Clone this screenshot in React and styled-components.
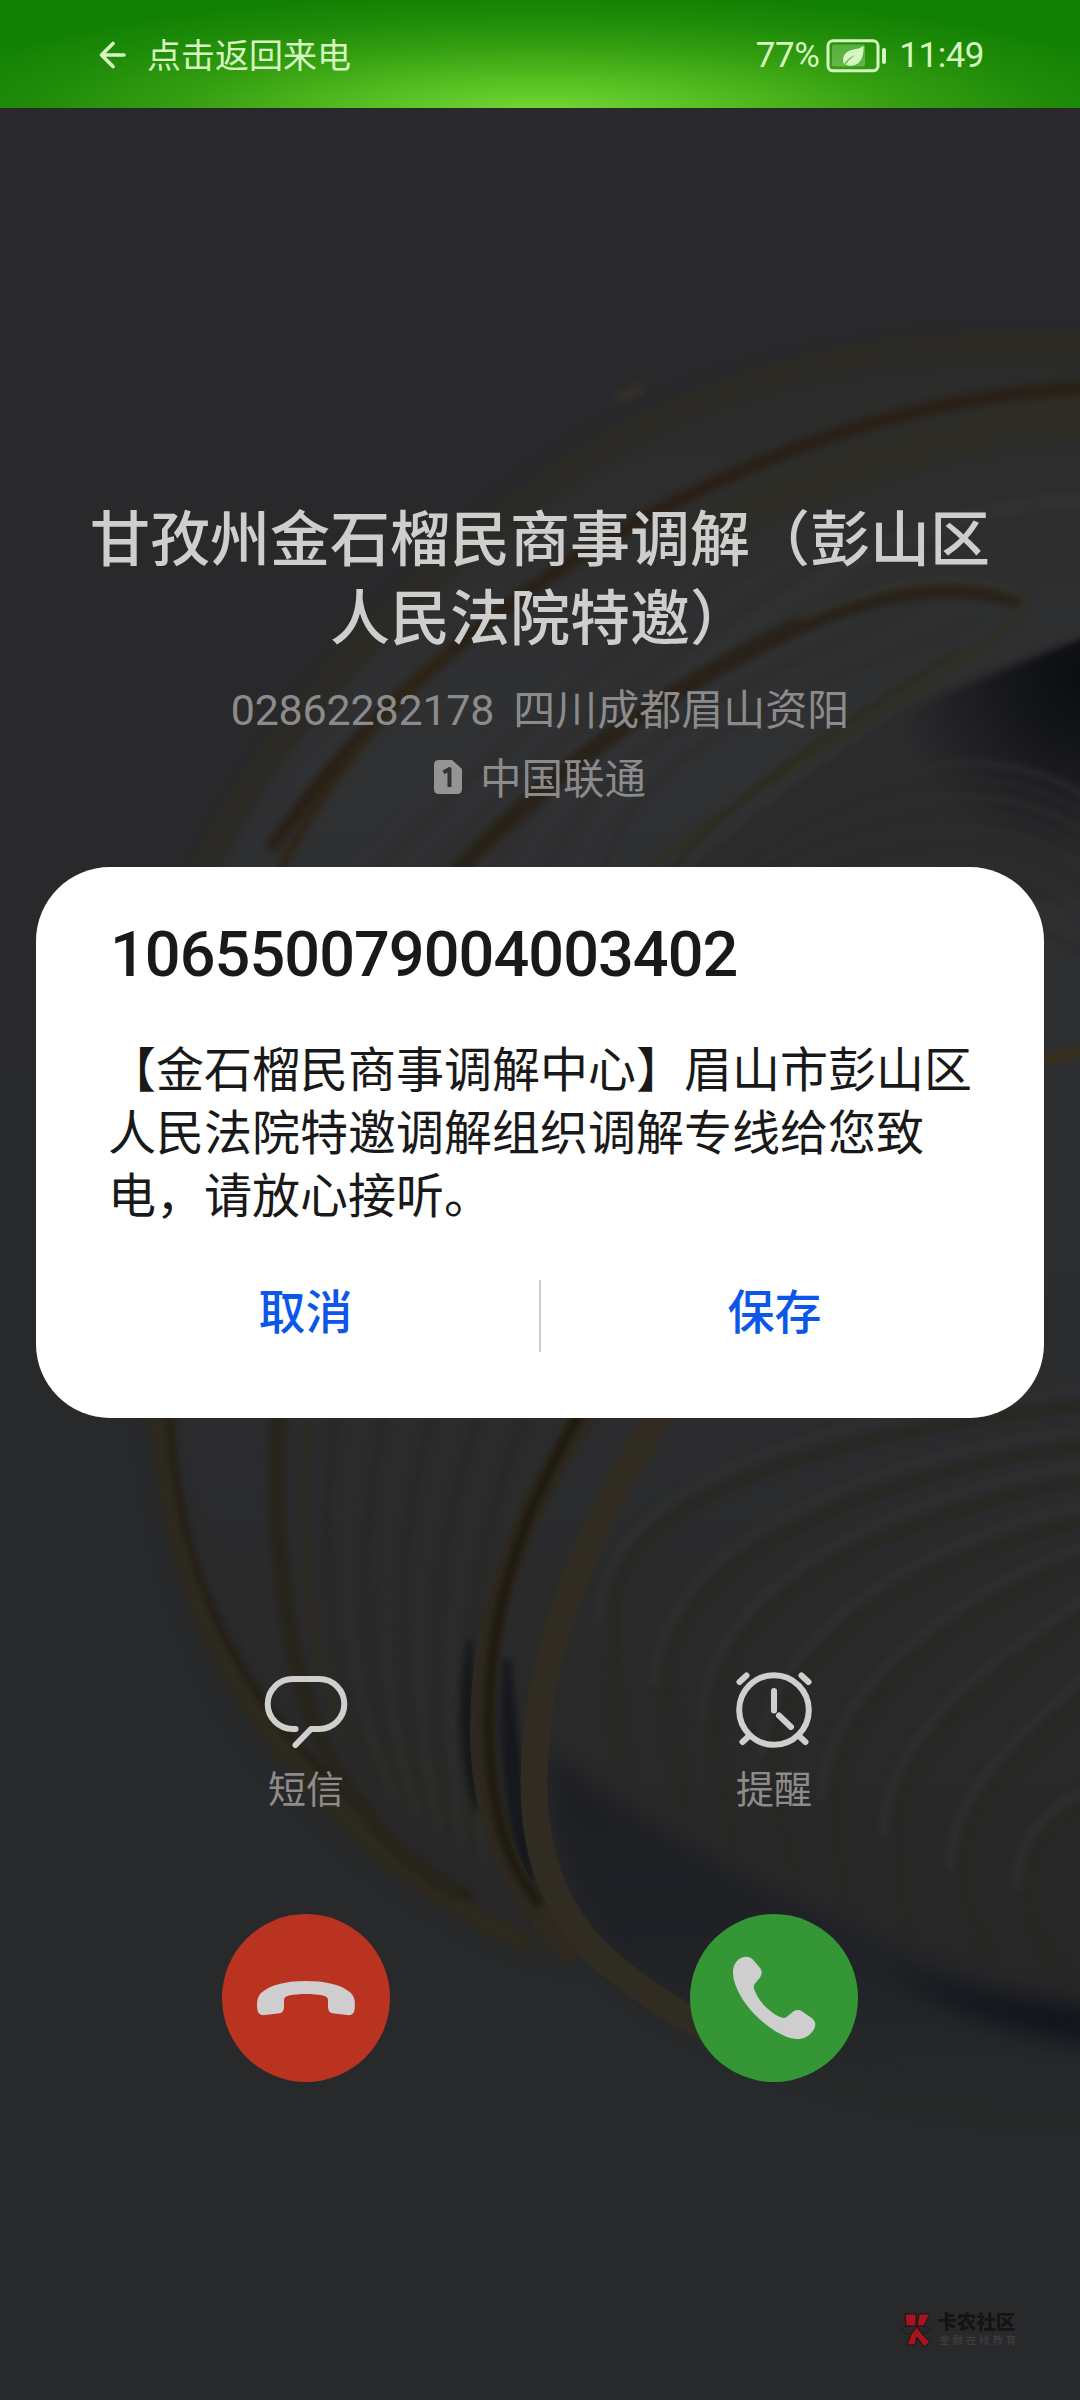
import React from 'react';
import styled, {createGlobalStyle} from 'styled-components';

const GlobalStyle = createGlobalStyle`
  body {
    background-color: #28292b;
    margin: 0;
  }

  button {
    background: none;
    border: 0;
    font-family: inherit;
    padding: 0;
  }
`;

const Screen = styled.div`
  background: linear-gradient(#29292b, #28292b 60%, #27292a 80%, #28292a);
  display: flex;
  flex-direction: column;
  font-family: Roboto, 'Noto Sans CJK SC', sans-serif;
  height: 2400px;
  isolation: isolate;
  overflow: hidden;
  position: relative;
  width: 1080px;
`;

const WallpaperArt = styled.svg`
  left: 0;
  position: absolute;
  top: 0;
  z-index: -1;
`;

const StatusBar = styled.header`
  align-items: center;
  background: radial-gradient(ellipse 640px 118px at 50% 104%, #74d936, #55be21 28%, #36a012 55%, #1f8b09 80%, #128103);
  box-sizing: border-box;
  color: #d6f8c0;
  display: flex;
  height: 108px;
  justify-content: space-between;
  padding: 3px 96px 0 99px;
`;

const ReturnLink = styled.div`
  align-items: center;
  display: flex;
  font-size: 34px;
  gap: 21px;
  line-height: 50px;

  svg {
    margin-bottom: 2px;
  }
`;

const StatusInfo = styled.div`
  align-items: center;
  display: flex;
  font-size: 35px;
  letter-spacing: -0.5px;
  line-height: 50px;

  svg {
    margin: 0 12px 0 7px;
  }
`;

const Caller = styled.section`
  align-items: center;
  box-sizing: border-box;
  display: flex;
  flex-direction: column;
  height: 759px;
  padding-top: 393px;
`;

const CallerName = styled.h1`
  color: #cecece;
  font-size: 60px;
  font-weight: 500;
  line-height: 79px;
  margin: 0 0 17px;
  text-align: center;
  width: 900px;
`;

const CallerLine = styled.div`
  align-items: center;
  color: #8b8b8b;
  display: flex;
  font-size: ${props => props.size || 42}px;
  gap: ${props => props.gap}px;
  line-height: 69px;

  svg {
    margin-bottom: 5px;
  }
`;

const Digits = styled.span`
  font-size: 43px;
  letter-spacing: -0.2px;
`;

const Dialog = styled.section`
  background-color: #fff;
  border-radius: 74px;
  box-sizing: border-box;
  color: #191919;
  display: flex;
  flex-direction: column;
  height: 551px;
  margin: 0 36px;
  padding: 51px 0 63px;
`;

const DialogTitle = styled.h2`
  font-size: 63px;
  font-weight: 500;
  letter-spacing: -0.95px;
  line-height: 74px;
  margin: 0 0 47px;
  padding: 0 74px;
`;

const DialogText = styled.p`
  font-size: 48px;
  line-height: 63px;
  margin: 0;
  padding: 0 72px;
  width: 864px;
`;

const DialogButtons = styled.div`
  align-items: center;
  display: grid;
  grid-template-columns: 1fr 2px 1fr;
  margin-top: auto;
`;

const DialogButton = styled.button`
  color: #0d57e8;
  font-size: 47px;
  font-weight: 500;
  line-height: 72px;
  padding: ${props => (props.end ? '0 36px 6px 0' : '0 0 6px 36px')};
`;

const Divider = styled.span`
  background-color: #cfcfcf;
  height: 72px;
`;

const CallControls = styled.section`
  display: grid;
  grid-template-columns: 468px 468px;
  justify-content: center;
  justify-items: center;
  padding-top: 252px;
`;

const QuickAction = styled.button`
  align-items: center;
  color: #8c8c8c;
  display: flex;
  flex-direction: column;
  font-size: 38px;
  height: 244px;
  line-height: 56px;

  svg {
    height: 84px;
    margin-bottom: 8px;
  }
`;

const RoundButton = styled.button`
  align-items: center;
  background-color: ${props => props.color};
  border-radius: 50%;
  display: flex;
  height: 168px;
  justify-content: center;
  width: 168px;
`;

const Brand = styled.footer`
  align-items: center;
  align-self: flex-end;
  display: flex;
  gap: 4px;
  margin: auto 61px 52px 0;
`;

const BrandText = styled.div`
  color: #141415;
  font-size: 19.5px;
  font-weight: 900;
  line-height: 20px;
`;

const BrandTagline = styled.div`
  color: #3d3e40;
  font-size: 10.5px;
  font-weight: 500;
  letter-spacing: 2.8px;
  line-height: 15px;
  padding-left: 2px;
`;

// Ridges fan in from the right edge and hook down on the left
const ridges = [
  [1405, 613, 1620, 625, 1770],
  [1445, 668, 1685, 690, 1820],
  [1480, 716, 1720, 735, 1850],
  [1520, 775, 1755, 795, 1880],
  [1560, 835, 1800, 850, 1910],
  [1610, 897, 1835, 910, 1930],
  [1665, 964, 1870, 985, 1950],
  [1770, 1030, 1890, 1055, 1970]
];

// Thin strands running alongside the outer ring
const strands = [0, 1, 2, 3, 4, 5, 6, 7, 8, 9];

const Wallpaper = () => (
  <WallpaperArt width="1080" height="2400" viewBox="0 0 1080 2400" fill="none" aria-hidden="true">
    <defs>
      <filter id="soft" x="0" y="0" width="1080" height="2400" filterUnits="userSpaceOnUse" colorInterpolationFilters="sRGB">
        <feGaussianBlur stdDeviation="3" />
      </filter>
      <filter id="softer" x="0" y="0" width="1080" height="2400" filterUnits="userSpaceOnUse" colorInterpolationFilters="sRGB">
        <feGaussianBlur stdDeviation="12" />
      </filter>
      <linearGradient id="shade" x1="0" y1="0" x2="0" y2="1">
        <stop offset="0" stopColor="#1d1e22" />
        <stop offset="0.5" stopColor="#1f2126" />
        <stop offset="1" stopColor="#27292b" />
      </linearGradient>
      <linearGradient id="body" x1="0" y1="350" x2="0" y2="2000" gradientUnits="userSpaceOnUse">
        <stop offset="0" stopColor="#2b2b2a" />
        <stop offset="0.25" stopColor="#303133" />
        <stop offset="0.6" stopColor="#2b2c2e" />
        <stop offset="1" stopColor="#282727" />
      </linearGradient>
      <radialGradient id="hollow" cx="1090" cy="675" r="190" gradientUnits="userSpaceOnUse">
        <stop offset="0" stopColor="#0b0c10" />
        <stop offset="0.4" stopColor="#15161a" />
        <stop offset="1" stopColor="#2a2a2c" />
      </radialGradient>
    </defs>
    <g filter="url(#softer)">
      <path
        d="M1120 350C860 340 680 390 551 480C400 590 260 750 205 900C150 1050 140 1300 160 1430C175 1570 220 1700 300 1780C380 1860 460 1920 560 1950L1120 2000Z"
        fill="url(#body)"
      />
      <path d="M545 1750C650 1830 860 1960 1120 2010V2105C900 2110 740 2060 640 1985C580 1940 550 1860 545 1750Z" fill="url(#shade)" />
      <path d="M880 1965C960 1990 1040 2005 1120 2008V2050C1040 2040 960 2020 880 1965Z" fill="#12141c" />
    </g>
    <g filter="url(#soft)">
      <path d="M1090 345C900 335 720 370 570 470C400 590 280 720 212 850C150 980 140 1300 165 1440" stroke="#2c2a24" strokeWidth="26" />
      <path d="M1090 415C960 425 820 470 680 545" stroke="#2d2c26" strokeWidth="44" />
      <path d="M1090 388C930 394 790 440 640 520C480 610 350 730 270 850" stroke="#292117" strokeWidth="14" />
      <path d="M450 650C390 700 320 790 280 870" stroke="#2e2517" strokeWidth="9" />
      <path d="M1090 500C930 500 780 590 650 700C580 760 510 820 470 880" stroke="#313132" strokeWidth="16" />
      {strands.map(i => (
        <path
          key={i}
          d={`M${740 + i * 26} ${540 + i * 9}C${600 + i * 16} ${640 + i * 8} ${460 + i * 18} 760 ${330 + i * 30} 890`}
          stroke={i % 2 ? '#2c2c2d' : '#313234'}
          strokeWidth="5"
        />
      ))}
      <path d="M1090 632C1040 648 970 670 915 700C860 740 760 800 660 900H1090Z" fill="#2b2b2c" />
      <path d="M1090 636C1040 655 975 680 915 710C890 760 940 860 1090 870Z" fill="url(#hollow)" />
      {strands.map(i => (
        <path
          key={i}
          d={`M1090 ${800 + i * 18}C1000 ${735 + i * 16} 860 ${760 + i * 16} ${760 - i * 12} ${850 + i * 14}`}
          stroke={i % 2 ? '#29292a' : '#2e2e2e'}
          strokeWidth="4"
        />
      ))}
      <path d="M1020 600C940 575 860 595 770 640C640 705 540 780 440 890" stroke="#282219" strokeWidth="18" />
      <path d="M1020 594C950 568 880 585 800 618" stroke="#34332c" strokeWidth="6" />
      <path d="M1024 596C1034 610 1000 640 900 700C800 765 720 810 635 880" stroke="#302f23" strokeWidth="7" />
      <path d="M960 650C850 720 720 800 665 880" stroke="#2a2a1c" strokeWidth="5" />
      <path d="M620 397L640 389" stroke="#343129" strokeWidth="11" strokeLinecap="round" />
      <path d="M160 1400C165 1550 210 1660 288 1755C373 1855 443 1905 530 1945" stroke="#2d291e" strokeWidth="20" />
      <path d="M169 1400C175 1550 220 1655 300 1748C363 1815 413 1865 473 1898" stroke="#241e15" strokeWidth="7" />
      <path d="M280 1400C270 1530 285 1670 330 1760C365 1820 410 1870 460 1895" stroke="#27241b" strokeWidth="16" />
      <path d="M310 1400C298 1530 303 1640 345 1740" stroke="#2d2a21" strokeWidth="8" />
      {strands.map(i => (
        <path
          key={i}
          d={`M${340 + i * 24} 1400C${315 + i * 20} 1530 ${325 + i * 16} 1690 ${385 + i * 11} ${1790 + i * 8}`}
          stroke={i % 2 ? '#2c2c2b' : '#292825'}
          strokeWidth="9"
        />
      ))}
      {ridges.map(([start, x, y, endX, endY]) => (
        <g key={start}>
          <path
            d={`M1090 ${start}C${x + 160} ${start + 35} ${x} ${y - 110} ${x} ${y}C${x} ${y + 50} ${endX - 10} ${endY - 50} ${endX} ${endY}`}
            stroke="#282723"
            strokeWidth="11"
          />
          <path
            d={`M1090 ${start - 16}C${x + 150} ${start + 15} ${x - 14} ${y - 120} ${x - 14} ${y}`}
            stroke="#2e2f30"
            strokeWidth="7"
          />
        </g>
      ))}
      <path d="M470 1640C458 1700 462 1760 476 1810C478 1760 470 1700 470 1640Z" fill="#17181b" stroke="#17181b" strokeWidth="5" />
      <path d="M507 1660C500 1750 508 1820 530 1880C522 1800 515 1740 507 1660Z" fill="#17181c" stroke="#17181c" strokeWidth="7" />
    </g>
    <path d="M590 1410C505 1530 482 1640 482 1730C482 1830 520 1900 575 1960" stroke="#2d2920" strokeWidth="24" />
    <path d="M582 1410C505 1540 488 1640 489 1730C491 1810 505 1860 540 1905" stroke="#1f1a0f" strokeWidth="10" filter="url(#soft)" />
    <path
      d="M662 1410C580 1540 534 1660 534 1785C534 1860 560 1920 605 1960C640 1990 670 2010 720 2035"
      stroke="#302c22"
      strokeWidth="27"
    />
    <path d="M1030 1060C1050 1060 1070 1056 1090 1048" stroke="#3a3016" strokeWidth="8" filter="url(#soft)" />
  </WallpaperArt>
);

const BackIcon = () => (
  <svg width="27" height="28" viewBox="0 0 27 28" fill="none" stroke="currentColor" strokeWidth="3.6" strokeLinecap="round" strokeLinejoin="round">
    <path d="M25 14H3M14 2.5L2.5 14L14 25.5" />
  </svg>
);

const BatteryIcon = () => (
  <svg width="61" height="34" viewBox="0 0 61 34">
    <rect x="2" y="1.8" width="50" height="30" rx="5" fill="none" stroke="currentColor" strokeWidth="3" />
    <rect x="6" y="5.5" width="33" height="22" rx="2" fill="currentColor" opacity="0.3" />
    <rect x="56" y="9" width="4" height="16" rx="2" fill="currentColor" />
    <path d="M37.5 6.5C38 15 36 25 27 26.5C23.5 27 21 26.5 19.5 25.5C22 21.5 25.5 18.5 29.5 16C24.5 17.5 20.5 21 18 25.5C15.5 19 18.5 13.5 24 11.5C29 9.7 34.5 10 37.5 6.5Z" fill="currentColor" />
  </svg>
);

const SimIcon = () => (
  <svg width="28" height="34" viewBox="0 0 28 34">
    <path d="M5 0H18L28 9V29Q28 34 23 34H5Q0 34 0 29V5Q0 0 5 0Z" fill="#949494" />
    <path d="M9.5 12.5L15.5 9V27" fill="none" stroke="#343434" strokeWidth="4" strokeLinejoin="round" />
  </svg>
);

const MessageIcon = () => (
  <svg width="84" height="84" viewBox="0 -5 84 84" fill="none" stroke="#cfcfcf" strokeWidth="6" strokeLinecap="round" strokeLinejoin="round">
    <path d="M31.5 54H28.7A25 25 0 0 1 28.7 4H55.3A25 25 0 0 1 55.3 54H47L31.5 70" />
  </svg>
);

const AlarmIcon = () => (
  <svg width="80" height="84" viewBox="0 0 80 84" fill="none" stroke="#cfcfcf" strokeWidth="6" strokeLinecap="round">
    <circle cx="40" cy="40" r="34.8" />
    <path d="M5.5 12L12.5 5.5M74.5 12L67.5 5.5M14.5 66.5L8.5 72M65.5 66.5L71.5 72M40 21V40.5" />
    <path d="M45 45.5L57 57" />
  </svg>
);

const HangUpIcon = () => (
  <svg width="100" height="36" viewBox="0 0 100 36" fill="#d0cdce">
    <path d="M9 35L22 33.5Q28 33 28 27V20Q28 16.5 33 15.5C43 13.5 57 13.5 67 15.5Q72 16.5 72 20V27Q72 33 78 33.5L91 35Q98 36 98.7 29C99.2 22 99 17.5 95 13C85 4 68 1 50 1C32 1 15 4 5 13C1 17.5 0.8 22 1.3 29Q2 36 9 35Z" />
  </svg>
);

const AnswerIcon = () => (
  <svg width="84" height="84" viewBox="0 0 84 84" fill="#cecece">
    <path d="M13.7 0.7C17 0.5 19.5 2 21.3 4L28 12C30.5 15 30 18.5 28 21.5L23.5 27C21.5 29.5 21.3 31 22.5 34C25 41 30 48 36 53C41 57.5 45.5 60 49.5 61.5C52 62.3 54 61.8 55.5 60.3L61.5 55.3C64 53.7 67.5 53.7 70 55.3L80 62.3C83.5 65 84 68.5 82.5 72C79.5 79 72 83.5 64.5 83C53 82 44 76 34 68.5C20 57.5 9 44 3.5 29C1.5 24 0.5 18 1.2 13C2.5 5.5 8 1 13.7 0.7Z" />
  </svg>
);

const BrandMark = () => (
  <svg width="34" height="36" viewBox="0 0 34 36">
    <ellipse cx="17" cy="18" rx="15" ry="4.5" fill="none" stroke="#1a1a1b" />
    <path d="M6 2H17V14L7 14ZM20 2H31L25 14H18ZM18 15L23 22L31 30L25 35L18 25L16 33H8L12 22Z" fill="#a3161f" stroke="#220d10" />
  </svg>
);

const App = () => (
  <>
    <GlobalStyle />
    <Screen>
      <Wallpaper />
      <StatusBar>
        <ReturnLink>
          <BackIcon />
          <span>点击返回来电</span>
        </ReturnLink>
        <StatusInfo>
          <span>77%</span>
          <BatteryIcon />
          <span>11:49</span>
        </StatusInfo>
      </StatusBar>
      <Caller>
        <CallerName>
          甘孜州金石榴民商事调解（彭山区
          <br />
          人民法院特邀）
        </CallerName>
        <CallerLine gap={19}>
          <Digits>02862282178</Digits>
          <span>四川成都眉山资阳</span>
        </CallerLine>
        <CallerLine gap={18} size={41.5}>
          <SimIcon />
          <span>中国联通</span>
        </CallerLine>
      </Caller>
      <Dialog>
        <DialogTitle>106550079004003402</DialogTitle>
        <DialogText>【金石榴民商事调解中心】眉山市彭山区人民法院特邀调解组织调解专线给您致电，请放心接听。</DialogText>
        <DialogButtons>
          <DialogButton>取消</DialogButton>
          <Divider />
          <DialogButton end>保存</DialogButton>
        </DialogButtons>
      </Dialog>
      <CallControls>
        <QuickAction>
          <MessageIcon />
          <span>短信</span>
        </QuickAction>
        <QuickAction>
          <AlarmIcon />
          <span>提醒</span>
        </QuickAction>
        <RoundButton color="#b93320">
          <HangUpIcon />
        </RoundButton>
        <RoundButton color="#349634">
          <AnswerIcon />
        </RoundButton>
      </CallControls>
      <Brand>
        <BrandMark />
        <div>
          <BrandText>卡农社区</BrandText>
          <BrandTagline>金融在线教育</BrandTagline>
        </div>
      </Brand>
    </Screen>
  </>
);

export default App;
